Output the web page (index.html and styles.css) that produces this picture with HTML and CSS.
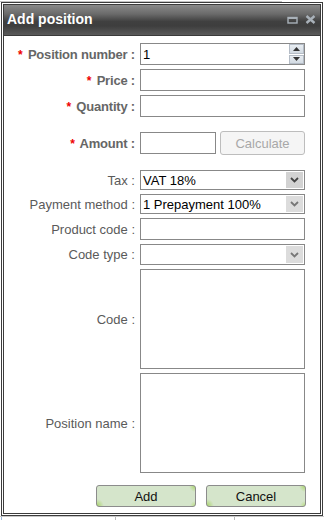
FILE: index.html
```html
<!DOCTYPE html>
<html lang="en">
<head>
  <meta charset="UTF-8" />
  <title>Add position</title>
  <link rel="stylesheet" href="styles.css">
</head>
<body>
  <div class="strip-top"></div>
  <div class="window">
    <div class="titlebar">
      <span class="title">Add position</span>
      <span class="tools">
        <svg class="tool" width="11" height="8" viewBox="0 0 11 8">
          <rect x="1" y="1.5" width="9" height="5.5" fill="none" stroke="#a9b1b9" stroke-width="1.4"/>
          <rect x="1" y="1" width="9" height="2" fill="#a9b1b9"/>
        </svg>
        <svg class="tool" width="11" height="9" viewBox="0 0 11 9">
          <path d="M1.5 1 L9.5 8 M9.5 1 L1.5 8" stroke="#a9b1b9" stroke-width="2.4"/>
        </svg>
      </span>
    </div>

    <form class="form">
      <div class="row">
        <label class="lbl req"><b>*</b> Position number :</label>
        <div class="field spin-field">
          <input class="inp" type="text" value="1">
          <div class="spinner">
            <span class="spin-btn"><svg width="7" height="4" viewBox="0 0 7 4"><path d="M0 4 L3.5 0 L7 4 Z" fill="#333"/></svg></span>
            <span class="spin-btn"><svg width="7" height="4" viewBox="0 0 7 4"><path d="M0 0 L3.5 4 L7 0 Z" fill="#333"/></svg></span>
          </div>
        </div>
      </div>
      <div class="row">
        <label class="lbl req"><b>*</b> Price :</label>
        <div class="field"><input class="inp" type="text"></div>
      </div>
      <div class="row">
        <label class="lbl req"><b>*</b> Quantity :</label>
        <div class="field"><input class="inp" type="text"></div>
      </div>
      <div class="row row-amount">
        <label class="lbl req"><b>*</b> Amount :</label>
        <div class="field amount-field">
          <input class="inp inp-short" type="text">
          <button type="button" class="btn-calc" disabled>Calculate</button>
        </div>
      </div>
      <div class="row row-tax">
        <label class="lbl">Tax :</label>
        <div class="select"><span>VAT 18%</span><span class="arrow dark"><svg width="9" height="6" viewBox="0 0 9 6"><path d="M1 1 L4.5 4.5 L8 1" fill="none" stroke="#444" stroke-width="1.8"/></svg></span></div>
      </div>
      <div class="row">
        <label class="lbl">Payment method :</label>
        <div class="select"><span>1 Prepayment 100%</span><span class="arrow"><svg width="9" height="6" viewBox="0 0 9 6"><path d="M1 1 L4.5 4.5 L8 1" fill="none" stroke="#777" stroke-width="1.8"/></svg></span></div>
      </div>
      <div class="row">
        <label class="lbl">Product code :</label>
        <div class="field"><input class="inp" type="text"></div>
      </div>
      <div class="row">
        <label class="lbl">Code type :</label>
        <div class="select select-tall"><span></span><span class="arrow"><svg width="9" height="6" viewBox="0 0 9 6"><path d="M1 1 L4.5 4.5 L8 1" fill="none" stroke="#777" stroke-width="1.8"/></svg></span></div>
      </div>
      <div class="row">
        <label class="lbl">Code :</label>
        <textarea class="area"></textarea>
      </div>
      <div class="row">
        <label class="lbl">Position name :</label>
        <textarea class="area"></textarea>
      </div>
      <div class="actions">
        <button type="button" class="btn">Add</button>
        <button type="button" class="btn">Cancel</button>
      </div>
    </form>
  </div>
  <div class="strip-bottom"><span></span><span></span><span></span></div>
</body>
</html>
```

FILE: styles.css
```css
* { box-sizing: border-box; }
body {
  margin: 0;
  background: #fff;
  font-family: "Liberation Sans", Arial, sans-serif;
  font-size: 13px;
  width: 324px;
  height: 520px;
  overflow: hidden;
}
.strip-top {
  height: 2px;
  width: 282px;
  border-bottom: 1px solid #c4c4c4;
}
.window {
  margin-left: 1px;
  width: 322px;
  height: 514px;
  border: 3px double #3c3c3c;
  background: #fff;
}
.titlebar {
  height: 31px;
  display: flex;
  align-items: center;
  justify-content: space-between;
  padding: 0 4px 0 3px;
  background: linear-gradient(#8a8a8a 0%, #6a6a6a 30%, #404040 55%, #3e3e3e 70%, #5a5a5a 100%);
  border-bottom: 1px solid #3a3a3a;
}
.title {
  color: #fff;
  font-weight: bold;
  font-size: 14px;
  margin-top: -2px;
}
.tools {
  display: flex;
  gap: 7px;
  align-items: center;
  margin-top: -1px;
}
.tool { display: block; }

.form {
  display: flex;
  flex-direction: column;
  gap: 4px;
  padding-top: 7px;
}
.row {
  display: grid;
  grid-template-columns: 131px 165px;
  column-gap: 5px;
  align-items: center;
}
.row-amount { margin-top: 10px; }
.row-tax { margin-top: 11px; }
.lbl {
  text-align: right;
  color: #5a5a5a;
  white-space: nowrap;
}
.lbl.req {
  font-weight: bold;
  color: #666;
  letter-spacing: -0.2px;
}
.lbl b {
  color: #e00;
  font-size: 12px;
  margin-right: 2px;
}
.field {
  display: flex;
  position: relative;
}
.inp {
  width: 100%;
  height: 22px;
  border: 1px solid #888;
  padding: 0 2px;
  font: 13px "Liberation Sans", Arial, sans-serif;
  color: #000;
  outline: none;
  background: #fff;
}
.spinner {
  position: absolute;
  right: 1px;
  top: 1px;
  bottom: 1px;
  width: 15px;
  display: flex;
  flex-direction: column;
  gap: 1px;
}
.spin-btn {
  flex: 1;
  display: flex;
  align-items: center;
  justify-content: center;
  background: linear-gradient(#e8edf2, #d2dae2);
  border: 1px solid #b4bcc6;
}
.amount-field { gap: 4px; align-items: center; }
.inp-short { width: 76px; flex: none; }
.btn-calc {
  flex: 1;
  height: 24px;
  border: 1px solid #bdbdbd;
  border-radius: 3px;
  background: #f5f5f5;
  color: #a8a8a8;
  font: 13px "Liberation Sans", Arial, sans-serif;
}
.select {
  height: 20px;
  border: 1px solid #888;
  display: flex;
  align-items: center;
  justify-content: space-between;
  padding: 1px 1px 1px 2px;
  color: #000;
}
.select-tall { height: 21px; }
.arrow {
  width: 17px;
  align-self: stretch;
  display: flex;
  align-items: center;
  justify-content: center;
  background: #dcdcdc;
}
.arrow.dark { background: #d2d2d2; }
.area {
  display: block;
  height: 100px;
  border: 1px solid #888;
  resize: none;
  outline: none;
  font: 13px "Liberation Sans", Arial, sans-serif;
}
.actions {
  display: flex;
  justify-content: flex-end;
  gap: 10px;
  margin-top: 8px;
  width: 302px;
}
.btn {
  width: 100px;
  height: 22px;
  border: 1px solid #8c8c8c;
  border-radius: 3px;
  background:
    radial-gradient(circle at 0 100%, #a9d46a 0, rgba(169, 212, 106, 0) 7px),
    radial-gradient(circle at 100% 0, #a9d46a 0, rgba(169, 212, 106, 0) 6px),
    radial-gradient(circle at 100% 100%, #b8dc80 0, rgba(184, 220, 128, 0) 5px),
    #d5e5cb;
  color: #111;
  font: 13px "Liberation Sans", Arial, sans-serif;
}
.strip-bottom {
  display: flex;
  border-top: 1px solid #c8c8c8;
  height: 6px;
}
.strip-bottom span {
  border-left: 1px solid #bbb;
}
.strip-bottom span:nth-child(1) { width: 114px; margin-left: 1px; border-left-color: #9cb8d8; }
.strip-bottom span:nth-child(2) { width: 119px; }
.strip-bottom span:nth-child(3) { width: 80px; }
```
